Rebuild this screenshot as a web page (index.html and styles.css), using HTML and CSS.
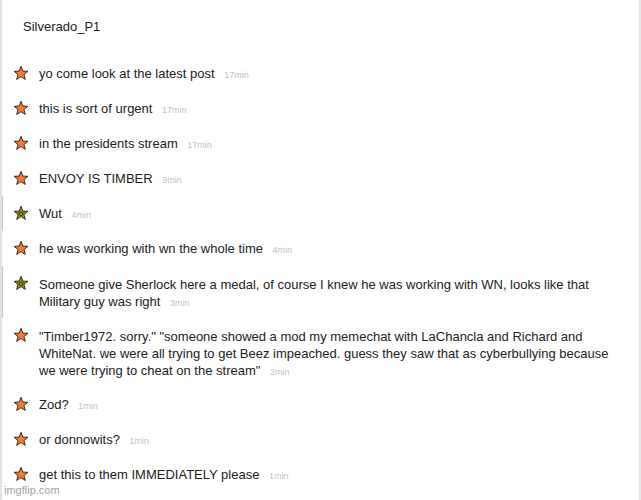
FILE: index.html
```html
<!DOCTYPE html>
<html>
<head>
<meta charset="utf-8">
<link rel="stylesheet" href="styles.css">
</head>
<body>
<svg width="0" height="0" class="defs">
  <defs>
    <path id="star" d="M12 1.8 L14.6 8.6 L21.8 8.9 L16.2 13.4 L18.1 20.4 L12 16.4 L5.9 20.4 L7.8 13.4 L2.2 8.9 L9.4 8.6 Z"/>
  </defs>
</svg>
<div class="page">
  <div class="title">Silverado_P1</div>
  <div class="list">
    <div class="row"><svg class="star orange" viewBox="0 0 24 24"><use href="#star"/></svg><div class="msg">yo come look at the latest post <span class="time">17min</span></div></div>
    <div class="row"><svg class="star orange" viewBox="0 0 24 24"><use href="#star"/></svg><div class="msg">this is sort of urgent <span class="time">17min</span></div></div>
    <div class="row"><svg class="star orange" viewBox="0 0 24 24"><use href="#star"/></svg><div class="msg">in the presidents stream <span class="time">17min</span></div></div>
    <div class="row"><svg class="star orange" viewBox="0 0 24 24"><use href="#star"/></svg><div class="msg">ENVOY IS TIMBER <span class="time">9min</span></div></div>
    <div class="row hl"><svg class="star green" viewBox="0 0 24 24"><use href="#star"/><circle cx="12" cy="12.5" r="2.6" class="inner"/><circle cx="9.5" cy="11" r="0.9" class="dot"/><circle cx="14.5" cy="11" r="0.9" class="dot"/></svg><div class="msg">Wut <span class="time">4min</span></div></div>
    <div class="row"><svg class="star orange" viewBox="0 0 24 24"><use href="#star"/></svg><div class="msg">he was working with wn the whole time <span class="time">4min</span></div></div>
    <div class="row hl"><svg class="star green" viewBox="0 0 24 24"><use href="#star"/><circle cx="12" cy="12.5" r="2.6" class="inner"/><circle cx="9.5" cy="11" r="0.9" class="dot"/><circle cx="14.5" cy="11" r="0.9" class="dot"/></svg><div class="msg multi">Someone give Sherlock here a medal, of course I knew he was working with WN, looks like that Military guy was right <span class="time">3min</span></div></div>
    <div class="row"><svg class="star orange" viewBox="0 0 24 24"><use href="#star"/></svg><div class="msg multi">"Timber1972. sorry." "someone showed a mod my memechat with LaChancla and Richard and WhiteNat. we were all trying to get Beez impeached. guess they saw that as cyberbullying because we were trying to cheat on the stream" <span class="time">2min</span></div></div>
    <div class="row"><svg class="star orange" viewBox="0 0 24 24"><use href="#star"/></svg><div class="msg">Zod? <span class="time">1min</span></div></div>
    <div class="row"><svg class="star orange" viewBox="0 0 24 24"><use href="#star"/></svg><div class="msg">or donnowits? <span class="time">1min</span></div></div>
    <div class="row"><svg class="star orange" viewBox="0 0 24 24"><use href="#star"/></svg><div class="msg">get this to them IMMEDIATELY please <span class="time">1min</span></div></div>
  </div>
  <div class="watermark">imgflip.com</div>
</div>
</body>
</html>
```
FILE: styles.css
```css
html, body {
  margin: 0;
  padding: 0;
  background: #ffffff;
}
.defs {
  position: absolute;
  width: 0;
  height: 0;
}
.page {
  position: relative;
  width: 637px;
  height: 500px;
  border-left: 2px solid #e2e2e2;
  border-right: 2px solid #e8e8e8;
  font-family: "Liberation Sans", Arial, sans-serif;
  font-size: 13px;
  color: #222222;
  overflow: hidden;
}
.title {
  padding: 18px 0 0 21px;
  line-height: 17px;
  height: 17px;
  margin-bottom: 21px;
}
.row {
  display: flex;
  align-items: flex-start;
  padding: 9px 0 9px 11px;
}
.row.hl {
  margin-left: -2px;
  border-left: 3px solid #cbcbcb;
  padding-left: 10px;
}
.star {
  flex: none;
  width: 18px;
  height: 17px;
  margin: 0 9px 0 -1px;
}
.star.orange use {
  fill: #f47b32;
  stroke: #2e2218;
  stroke-width: 1.3;
  stroke-linejoin: round;
}
.star.green use {
  fill: #8e8d1d;
  stroke: #2a2a14;
  stroke-width: 1.3;
  stroke-linejoin: round;
}
.star .inner {
  fill: none;
  stroke: #3a3a10;
  stroke-width: 1.2;
}
.star .dot {
  fill: #3a3a10;
}
.msg {
  width: 572px;
  line-height: 17px;
}
.msg.multi {
  margin-top: 1px;
  margin-bottom: -1px;
}
.time {
  font-size: 9px;
  line-height: 9px;
  color: #c2c2c2;
  margin-left: 6px;
}
.watermark {
  position: absolute;
  left: 2px;
  bottom: 3px;
  font-size: 11px;
  color: #a3a3a3;
  line-height: 14px;
}
```
